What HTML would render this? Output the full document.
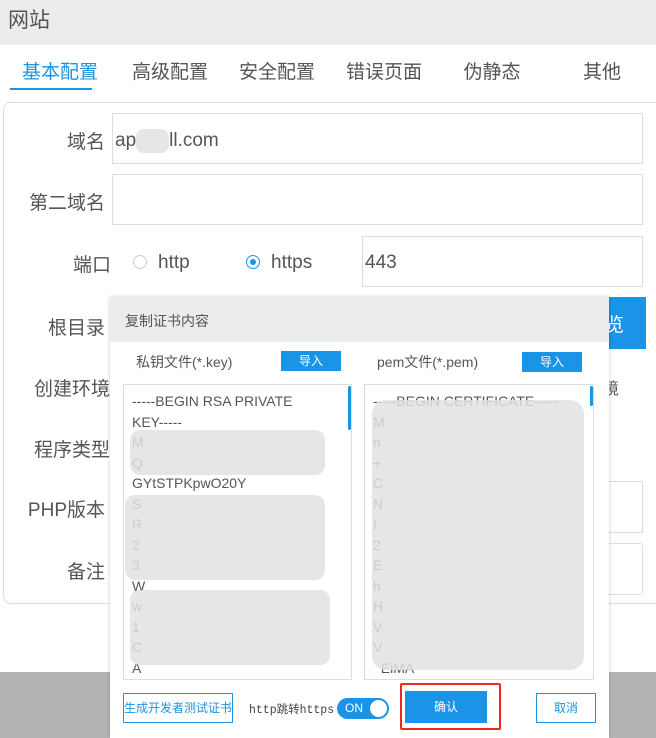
<!DOCTYPE html>
<html><head><meta charset="utf-8"><style>
*{margin:0;padding:0;box-sizing:border-box}
body{width:656px;height:738px;overflow:hidden;background:#fff;font-family:"Liberation Sans","Noto Sans CJK SC",sans-serif;color:#555;position:relative}
.a{position:absolute}
.hdr{left:0;top:0;width:656px;height:45px;background:#ececec;font-size:21px;padding:4px 8px;color:#555}
.tab{top:57px;font-size:19px;color:#555;width:80px;text-align:center}
.lbl{font-size:19px;color:#555;text-align:right;width:100px;left:5px}
.inp{border:1px solid #ddd;background:#fff}
.blur{background:#e2e2e2;border-radius:10px;opacity:.85}
.ta{border:1px solid #ddd;background:#fff;overflow:hidden;font-size:14px;line-height:20.5px;padding:6px 8px;color:#555}
.btn{background:#1a94e6;color:#fff;font-size:12px;text-align:center}
</style></head><body>
<div class="a hdr">网站</div>
<div class="a tab" style="left:20px;color:#1a94e6">基本配置</div>
<div class="a" style="left:10px;top:88px;width:82px;height:2px;background:#1a94e6"></div>
<div class="a tab" style="left:130px">高级配置</div>
<div class="a tab" style="left:237px">安全配置</div>
<div class="a tab" style="left:344px">错误页面</div>
<div class="a tab" style="left:452px">伪静态</div>
<div class="a tab" style="left:562px">其他</div>
<div class="a" style="left:3px;top:102px;width:670px;height:502px;border:1px solid #ddd;border-radius:8px"></div>
<div class="a lbl" style="top:127px">域名</div>
<div class="a inp" style="left:112px;top:113px;width:531px;height:51px;font-size:19px;padding:15px 2px;color:#555">ap<span style="display:inline-block;width:33px;height:24px;background:#e6e6e6;border-radius:8px;vertical-align:middle"></span>ll.com</div>
<div class="a lbl" style="top:188px">第二域名</div>
<div class="a inp" style="left:112px;top:174px;width:531px;height:51px"></div>
<div class="a lbl" style="top:250px;left:11px">端口</div>
<div class="a" style="left:133px;top:255px;width:14px;height:14px;border:1px solid #ccc;border-radius:50%"></div>
<div class="a" style="left:158px;top:252px;font-size:19px">http</div>
<div class="a" style="left:246px;top:255px;width:14px;height:14px;border:1px solid #1a94e6;border-radius:50%"><div style="margin:3px;width:6px;height:6px;background:#1a94e6;border-radius:50%"></div></div>
<div class="a" style="left:271px;top:252px;font-size:19px">https</div>
<div class="a inp" style="left:362px;top:236px;width:281px;height:51px;font-size:19px;padding:15px 2px">443</div>
<div class="a lbl" style="top:313px">根目录</div>
<div class="a" style="left:558px;top:297px;width:88px;height:52px;background:#1a94e6;color:#fff;font-size:19px;padding:13px 0 0 28px">浏览</div>
<div class="a lbl" style="top:374px;left:10px">创建环境</div>
<div class="a" style="left:603px;top:375px;font-size:16px">境</div>
<div class="a lbl" style="top:435px;left:10px">程序类型</div>
<div class="a lbl" style="top:495px">PHP版本</div>
<div class="a lbl" style="top:557px">备注</div>
<div class="a inp" style="left:560px;top:481px;width:83px;height:52px"></div>
<div class="a inp" style="left:560px;top:543px;width:83px;height:52px;border-radius:3px"></div>
<div class="a" style="left:0;top:672px;width:656px;height:66px;background:#b3b3b3"></div>
<div class="a" style="left:110px;top:297px;width:499px;height:441px;background:#fff;box-shadow:0 0 4px rgba(0,0,0,.2)">
<div style="height:45px;background:#ececec;font-size:14px;padding:14px 15px;color:#555">复制证书内容</div>
</div>
<div class="a" style="left:136px;top:352px;font-size:14px">私钥文件(*.key)</div>
<div class="a btn" style="left:281px;top:351px;width:60px;height:20px;line-height:20px">导入</div>
<div class="a" style="left:377px;top:352px;font-size:14px">pem文件(*.pem)</div>
<div class="a btn" style="left:522px;top:352px;width:60px;height:20px;line-height:20px">导入</div>
<div class="a ta" style="left:123px;top:384px;width:229px;height:296px">-----BEGIN RSA PRIVATE<br>KEY-----<br>M<br>Q<br>GYtSTPKpwO20Y<br>S<br>R<br>2<br>3<br>W<br>w<br>1<br>C<br>A</div>
<div class="a" style="left:348px;top:386px;width:3px;height:44px;background:#1a94e6;border-radius:2px"></div>
<div class="a blur" style="left:130px;top:430px;width:195px;height:45px"></div>
<div class="a blur" style="left:125px;top:495px;width:200px;height:85px"></div>
<div class="a blur" style="left:130px;top:590px;width:200px;height:75px"></div>
<div class="a ta" style="left:364px;top:384px;width:230px;height:296px">-----BEGIN CERTIFICATE-----<br>M<br>n<br>+<br>C<br>N<br>I<br>2<br>E<br>h<br>H<br>V<br>V<br>&nbsp;&nbsp;EiMA</div>
<div class="a" style="left:590px;top:386px;width:3px;height:20px;background:#1a94e6;border-radius:2px"></div>
<div class="a blur" style="left:372px;top:400px;width:212px;height:270px;border-radius:14px"></div>
<div class="a" style="left:123px;top:693px;width:110px;height:30px;border:1px solid #1a94e6;color:#1a94e6;font-size:12px;text-align:center;line-height:28px">生成开发者测试证书</div>
<div class="a" style="left:249px;top:701px;font-size:11.5px;font-family:'Liberation Mono','Noto Sans CJK SC',monospace;color:#444">http跳转https</div>
<div class="a" style="left:337px;top:698px;width:52px;height:21px;background:#1a94e6;border-radius:11px;color:#fff;font-size:12px;padding:3px 0 0 8px">ON<div style="position:absolute;right:2px;top:2px;width:17px;height:17px;background:#fff;border-radius:50%"></div></div>
<div class="a" style="left:400px;top:683px;width:101px;height:47px;border:2px solid #f2261c;border-radius:2px"></div>
<div class="a btn" style="left:405px;top:691px;width:82px;height:32px;line-height:32px">确认</div>
<div class="a" style="left:536px;top:693px;width:60px;height:30px;border:1px solid #1a94e6;color:#1a94e6;font-size:12px;text-align:center;line-height:28px">取消</div>
</body></html>
